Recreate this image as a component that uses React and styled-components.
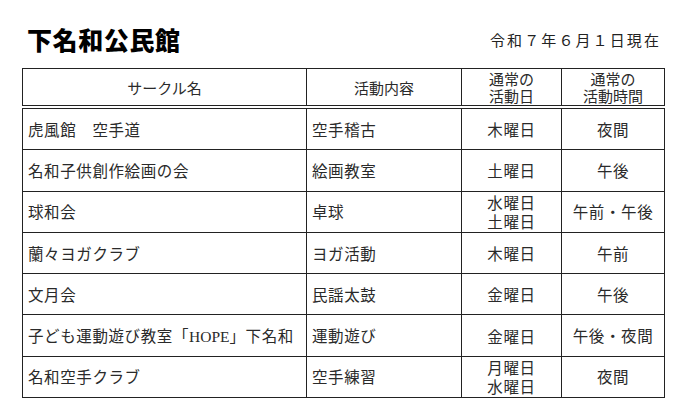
import React from "react";
import styled, { createGlobalStyle } from "styled-components";

const GlobalStyle = createGlobalStyle`
  html, body {
    margin: 0;
    padding: 0;
    background: #fff;
  }
  body {
    font-family: "Liberation Serif", "Noto Sans CJK JP", serif;
    color: #222;
  }
`;

const Page = styled.div`
  width: 690px;
  height: 409px;
  overflow: hidden;
  padding: 20px 26px 0 22px;
  box-sizing: border-box;
`;

const Header = styled.header`
  display: flex;
  align-items: center;
  justify-content: space-between;
  height: 38px;
  margin-bottom: 10px;
`;

const Title = styled.h1`
  margin: 0 0 0 5px;
  font-family: "Noto Sans CJK JP", sans-serif;
  font-weight: 900;
  font-size: 25px;
  letter-spacing: 0.6px;
  color: #000;
`;

const AsOf = styled.div`
  font-family: "Noto Sans CJK JP", sans-serif;
  font-size: 15px;
  letter-spacing: 2.1px;
  color: #222;
  margin-right: 3px;
`;

const Table = styled.table`
  width: 642px;
  table-layout: fixed;
  border-collapse: collapse;
  border: 1.5px solid #222;
  font-family: "Liberation Serif", "Noto Sans CJK JP", serif;
  font-size: 15.5px;
  color: #2a2a2a;
`;

const HeadCell = styled.th`
  font-weight: 400;
  text-align: center;
  border: 1.5px solid #222;
  border-bottom: 4px double #222;
  height: 36px;
  padding: 0;
  line-height: 17px;
  font-size: 15px;
  font-family: "Noto Sans CJK JP", sans-serif;
`;

const Cell = styled.td`
  border: 1.5px solid #222;
  height: 40.3px;
  padding: 0 ${(p) => (p.$center ? "0" : "5px")};
  text-align: ${(p) => (p.$center ? "center" : "left")};
  vertical-align: middle;
  line-height: 19px;
  white-space: nowrap;
  letter-spacing: 0.6px;
  font-family: "Noto Sans CJK JP", sans-serif;
`;

const DayLine = styled.div`
  line-height: ${(p) => (p.$multi ? "19px" : "20px")};
`;

const Latin = styled.span`
  font-family: "Liberation Serif", serif;
  letter-spacing: 0;
`;

const rows = [
  ["虎風館　空手道", "空手稽古", ["木曜日"], "夜間"],
  ["名和子供創作絵画の会", "絵画教室", ["土曜日"], "午後"],
  ["球和会", "卓球", ["水曜日", "土曜日"], "午前・午後"],
  ["蘭々ヨガクラブ", "ヨガ活動", ["木曜日"], "午前"],
  ["文月会", "民謡太鼓", ["金曜日"], "午後"],
  [
    <>子ども運動遊び教室「<Latin>HOPE</Latin>」下名和</>,
    "運動遊び",
    ["金曜日"],
    "午後・夜間",
  ],
  ["名和空手クラブ", "空手練習", ["月曜日", "水曜日"], "夜間"],
];

export default function App() {
  return (
    <>
      <GlobalStyle />
      <Page>
        <Header>
          <Title>下名和公民館</Title>
          <AsOf>令和７年６月１日現在</AsOf>
        </Header>
        <Table>
          <colgroup>
            <col style={{ width: 284 }} />
            <col style={{ width: 155 }} />
            <col style={{ width: 100 }} />
            <col style={{ width: 103 }} />
          </colgroup>
          <thead>
            <tr>
              <HeadCell>サークル名</HeadCell>
              <HeadCell>活動内容</HeadCell>
              <HeadCell>
                通常の
                <br />
                活動日
              </HeadCell>
              <HeadCell>
                通常の
                <br />
                活動時間
              </HeadCell>
            </tr>
          </thead>
          <tbody>
            {rows.map(([name, act, days, time], i) => (
              <tr key={i}>
                <Cell>{name}</Cell>
                <Cell>{act}</Cell>
                <Cell $center>
                  {days.map((d, j) => (
                    <DayLine key={j} $multi={days.length > 1}>
                      {d}
                    </DayLine>
                  ))}
                </Cell>
                <Cell $center>{time}</Cell>
              </tr>
            ))}
          </tbody>
        </Table>
      </Page>
    </>
  );
}
